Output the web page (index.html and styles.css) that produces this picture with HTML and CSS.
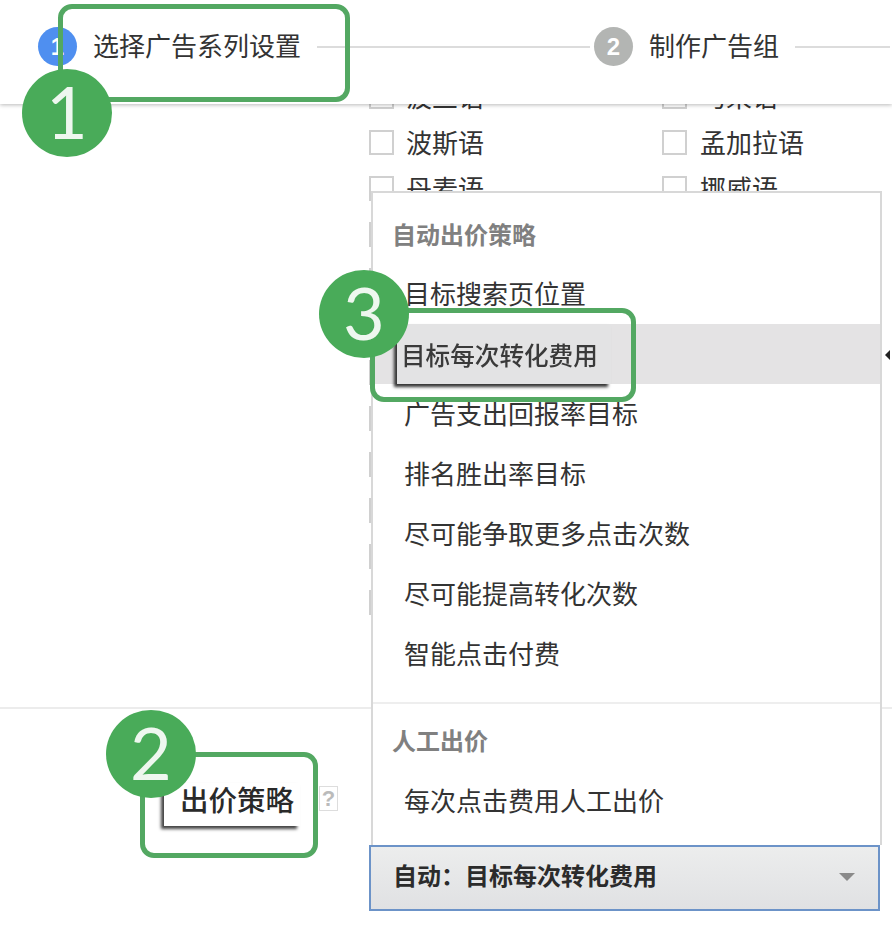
FILE: index.html
```html
<!DOCTYPE html>
<html lang="zh-CN">
<head>
<meta charset="utf-8">
<title>出价策略</title>
<link rel="stylesheet" href="styles.css">
</head>
<body>
<div class="page">
  <header class="stepper">
    <span class="dot dot-active">1</span>
    <span class="step-label">选择广告系列设置</span>
    <span class="step-line step-line-long"></span>
    <span class="dot dot-idle">2</span>
    <span class="step-label">制作广告组</span>
    <span class="step-line"></span>
  </header>

  <section class="langs">
    <label class="lang"><span class="box"></span>波兰语</label>
    <label class="lang"><span class="box"></span>马来语</label>
    <label class="lang"><span class="box"></span>波斯语</label>
    <label class="lang"><span class="box"></span>孟加拉语</label>
    <label class="lang"><span class="box"></span>丹麦语</label>
    <label class="lang"><span class="box"></span>挪威语</label>
    <label class="lang"><span class="box"></span></label>
    <label class="lang"><span class="box"></span></label>
    <label class="lang"><span class="box"></span></label>
    <label class="lang"><span class="box"></span></label>
    <label class="lang"><span class="box"></span></label>
    <label class="lang"><span class="box"></span></label>
    <label class="lang"><span class="box"></span></label>
    <label class="lang"><span class="box"></span></label>
    <label class="lang"><span class="box"></span></label>
    <label class="lang"><span class="box"></span></label>
    <label class="lang"><span class="box"></span></label>
    <label class="lang"><span class="box"></span></label>
    <label class="lang"><span class="box"></span></label>
    <label class="lang"><span class="box"></span></label>
    <label class="lang"><span class="box"></span></label>
    <label class="lang"><span class="box"></span></label>
    <label class="lang"><span class="box"></span></label>
    <label class="lang"><span class="box"></span></label>
  </section>

  <section class="bid">
    <div class="bid-label">
      <span class="bid-title">出价策略</span>
      <span class="help">?</span>
    </div>
    <div class="select">
      <span>自动&#xFF1A;目标每次转化费用</span>
      <span class="caret"></span>
    </div>
  </section>

  <div class="menu">
    <div class="menu-head">自动出价策略</div>
    <div class="menu-item">目标搜索页位置</div>
    <div class="menu-item menu-item-on"><span class="raised">目标每次转化费用</span></div>
    <div class="menu-item">广告支出回报率目标</div>
    <div class="menu-item">排名胜出率目标</div>
    <div class="menu-item">尽可能争取更多点击次数</div>
    <div class="menu-item">尽可能提高转化次数</div>
    <div class="menu-item">智能点击付费</div>
    <div class="menu-rule"></div>
    <div class="menu-head menu-head-2">人工出价</div>
    <div class="menu-item">每次点击费用人工出价</div>
  </div>
  <span class="pointer"></span>

  <div class="frame frame-1"></div>
  <div class="frame frame-2"></div>
  <div class="frame frame-3"></div>
  <div class="badge badge-1">1</div>
  <div class="badge badge-2">2</div>
  <div class="badge badge-3">3</div>
</div>
</body>
</html>
```

FILE: styles.css
```css
* { box-sizing: border-box; }
html, body { margin: 0; padding: 0; background: #fff; }
body { font-family: "Noto Sans CJK SC", "Liberation Sans", sans-serif; color: #333; }
.page { position: relative; width: 892px; height: 932px; overflow: hidden; background: #fff; }

.stepper {
  position: relative; z-index: 2; height: 104px; background: #fff;
  display: flex; align-items: flex-start; padding: 27px 2px 0 38px;
  box-shadow: 0 1px 4px rgba(0,0,0,.28);
}
.dot {
  flex: none; width: 39px; height: 39px; border-radius: 50%;
  font: 700 24px/39px "Liberation Sans", sans-serif; color: #fff; text-align: center;
}
.dot-active { background: #4f8ff0; }
.dot-idle { background: #b3b5b3; }
.step-label { flex: none; margin-left: 16px; font-size: 26px; line-height: 35px; color: #333; }
.step-line { flex: 1; height: 2px; margin: 19px 0 0 16px; background: #dcdcdc; }
.step-line-long { flex: none; width: 273px; margin-right: 4px; }

.langs {
  height: 622px; margin-top: -31px; margin-bottom: 12px; padding-left: 369px; overflow: hidden;
  display: grid; grid-template-columns: 293px 1fr; grid-auto-rows: 46px; align-content: start;
}
.lang { display: flex; align-items: center; height: 44px; font-size: 26px; color: #333; }
.box { flex: none; width: 25px; height: 25px; margin: 2px 12px 0 0; border: 2px solid #d0d0d0; background: #fff; }
.lang:nth-child(even) .box { margin-right: 13px; }

.bid {
  height: 225px; border-top: 2px solid #ececec; padding-left: 164px;
  display: flex; align-items: flex-start; background: #fff;
}
.bid-label { display: flex; align-items: flex-start; width: 205px; padding-top: 74px; }
.bid-title {
  width: 136px; height: 43px; padding-left: 16px; background: #fff;
  font-size: 28.5px; line-height: 32px; font-weight: 500; color: #2a2a2a; white-space: nowrap;
  box-shadow: -3px 3px 3px #444;
}
.help {
  width: 19px; height: 25px; margin: 3px 0 0 19px; border: 1px solid #ddd;
  font: 700 22px/23px "Liberation Sans", sans-serif; color: #bbb; text-align: center;
}
.select {
  width: 511px; height: 66px; margin-top: 136px; padding: 0 23px 8px 22px;
  display: flex; align-items: center; justify-content: space-between;
  border: 2px solid #6c93c8; background: linear-gradient(#eceded, #e0e1e3);
  font-size: 24px; font-weight: 700; color: #2b2b2b; white-space: nowrap;
}
.caret {
  width: 0; height: 0; margin-top: 6px; border-left: 8px solid transparent; border-right: 8px solid transparent;
  border-top: 8px solid #8a8a8a;
}

.menu {
  position: absolute; z-index: 1; left: 371px; top: 191px; width: 511px; height: 654px;
  background: #fff; border: 2px solid #d8d8d8; border-bottom: 0;
}
.menu-head { height: 71px; padding: 24px 0 0 19px; font-size: 24px; line-height: 34px; font-weight: 700; color: #808080; }
.menu-head-2 { height: 67px; padding-top: 19px; }
.menu-item { height: 60px; padding-left: 31px; font-size: 26px; line-height: 58px; color: #333; white-space: nowrap; }
.menu-item-on { padding-left: 0; background: #e4e3e4; }
.raised {
  display: block; width: 214px; height: 60px; margin-left: 24px; padding-left: 4px;
  background: #e3e3e4; font-size: 24.6px; line-height: 60px; font-weight: 500; color: #3a3a3a; filter: blur(.5px);
  box-shadow: -3px 3px 3px #333;
}
.menu-rule { height: 2px; margin-top: 18px; background: #eee; }
.pointer {
  position: absolute; z-index: 1; left: 885px; top: 350px; width: 0; height: 0;
  border-top: 5px solid transparent; border-bottom: 5px solid transparent; border-right: 5px solid #222;
}

.frame { position: absolute; z-index: 3; border: 5px solid #53a862; border-radius: 14px; }
.frame-1 { left: 58px; top: 4px; width: 292px; height: 98px; }
.frame-2 { left: 140px; top: 752px; width: 178px; height: 106px; }
.frame-3 { left: 370px; top: 308px; width: 266px; height: 94px; }

.badge {
  position: absolute; z-index: 4; width: 90px; height: 88px; border-radius: 50%;
  background: #49ab59; color: #eef7ef; text-align: center;
  font: 400 72px/84px Lato, "Open Sans", sans-serif;
}
.badge-1 { left: 22px; top: 69px; }
.badge-2 { left: 106px; top: 710px; }
.badge-3 { left: 319px; top: 270px; }
```
